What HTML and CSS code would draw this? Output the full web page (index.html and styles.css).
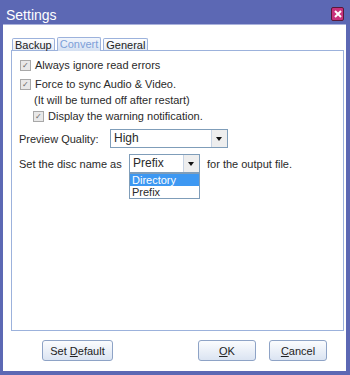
FILE: index.html
```html
<!DOCTYPE html>
<html lang="en">
  <head>
    <meta charset="UTF-8" />
    <title>Settings</title>
    <link rel="stylesheet" href="styles.css">
  </head>
  <body>
    <div class="window">
      <div class="titlebar">
        <span class="title">Settings</span>
        <span class="close">
          <svg width="8" height="8" viewBox="0 0 8 8">
            <path d="M1 1 L7 7 M7 1 L1 7" stroke="#fff" stroke-width="2" />
          </svg>
        </span>
      </div>
      <div class="client">
        <div class="tabs">
          <div class="tab">Backup</div>
          <div class="tab active">Convert</div>
          <div class="tab">General</div>
        </div>
        <div class="panel">
          <div class="check-row">
            <span class="checkbox">&#10003;</span>
            <span>Always ignore read errors</span>
          </div>
          <div class="check-row second">
            <span class="checkbox">&#10003;</span>
            <span>Force to sync Audio &amp; Video.</span>
          </div>
          <div class="note">(It will be turned off after restart)</div>
          <div class="check-row sub">
            <span class="checkbox">&#10003;</span>
            <span>Display the warning notification.</span>
          </div>
          <div class="field-row quality">
            <span class="label">Preview Quality:</span>
            <div class="combo wide">
              <span class="combo-value">High</span>
              <span class="combo-btn"></span>
            </div>
          </div>
          <div class="field-row disc">
            <span class="label label-disc">Set the disc name as</span>
            <div class="combo narrow">
              <span class="combo-value">Prefix</span>
              <span class="combo-btn"></span>
              <ul class="dropdown">
                <li class="selected">Directory</li>
                <li>Prefix</li>
              </ul>
            </div>
            <span class="suffix">for the output file.</span>
          </div>
        </div>
        <div class="footer">
          <button class="btn btn-default">Set <u>D</u>efault</button>
          <div class="spacer"></div>
          <button class="btn"><u>O</u>K</button>
          <button class="btn"><u>C</u>ancel</button>
        </div>
      </div>
    </div>
  </body>
</html>
```

FILE: styles.css
```css
body {
  margin: 0;
  font-family: "Liberation Sans", Arial, sans-serif;
  font-size: 11px;
  color: #2a2a2a;
}

.window {
  width: 350px;
  height: 375px;
  box-sizing: border-box;
  background-color: #5c68b4;
  border-left: 3px solid #5c68b4;
  border-right: 4px solid #5c68b4;
  border-bottom: 4px solid #5c68b4;
  display: flex;
  flex-direction: column;
}

.titlebar {
  height: 24px;
  display: flex;
  align-items: center;
  justify-content: space-between;
  padding-left: 3px;
  padding-right: 2px;
}

.title {
  color: #ffffff;
  font-size: 14px;
  margin-top: 6px;
}

.close {
  width: 11px;
  height: 12px;
  margin-top: 3px;
  background-color: #c8327c;
  border: 1px solid #5a1838;
  border-radius: 2px;
  display: flex;
  align-items: center;
  justify-content: center;
}

.client {
  flex: 1;
  background-color: #ffffff;
  padding: 12px 0 0 8px;
  border-top: 1px solid #aab2dc;
}

.tabs {
  display: flex;
  align-items: flex-end;
  height: 13px;
  padding-left: 1px;
}

.tab {
  height: 11px;
  line-height: 12px;
  padding: 0 2px;
  margin-right: 2px;
  border: 1px solid #9cb2dc;
  border-bottom: none;
  border-radius: 2px 2px 0 0;
  background: linear-gradient(#ffffff, #e6ecf6);
  font-size: 11px;
  color: #222222;
  position: relative;
}

.tab.active {
  height: 13px;
  color: #7d9fd8;
  background: linear-gradient(#f2f6fc, #d4e0f2);
  top: 1px;
}

.panel {
  border: 1px solid #9cb2dc;
  padding: 6px 0 0 7px;
  box-sizing: border-box;
  width: 333px;
  height: 281px;
}

.check-row {
  display: flex;
  align-items: center;
  height: 16px;
}

.check-row.second {
  margin-top: 3px;
}

.check-row.sub {
  padding-left: 13px;
}

.checkbox {
  width: 9px;
  height: 9px;
  margin: 0 4px 0 1px;
  border: 1px solid #a8a8a8;
  background-color: #e8e8e8;
  color: #666666;
  font-size: 8px;
  line-height: 9px;
  text-align: center;
}

.note {
  height: 16px;
  line-height: 16px;
  padding-left: 15px;
}

.field-row {
  display: flex;
  align-items: center;
}

.field-row.quality {
  margin-top: 5px;
}

.field-row.disc {
  margin-top: 6px;
}

.label {
  width: 91px;
}

.label-disc {
  width: 110px;
}

.combo {
  display: flex;
  height: 17px;
  border: 1px solid #7f9db9;
  background-color: #ffffff;
  position: relative;
}

.combo.wide {
  width: 116px;
}

.combo.narrow {
  width: 69px;
}

.combo-value {
  flex: 1;
  line-height: 17px;
  padding-left: 3px;
  font-size: 12px;
}

.combo-btn {
  width: 15px;
  border-left: 1px solid #c8d4e4;
  background-color: #eeeeee;
  position: relative;
}

.combo-btn::after {
  content: "";
  position: absolute;
  left: 4px;
  top: 7px;
  border-left: 3px solid transparent;
  border-right: 3px solid transparent;
  border-top: 4px solid #111111;
}

.dropdown {
  position: absolute;
  top: 18px;
  left: -1px;
  width: 69px;
  margin: 0;
  padding: 0;
  list-style: none;
  border: 1px solid #7f9db9;
  background-color: #ffffff;
}

.dropdown li {
  height: 12px;
  line-height: 12px;
  padding-left: 2px;
  font-size: 11px;
}

.dropdown li.selected {
  background-color: #3d98f2;
  color: #ffffff;
}

.suffix {
  margin-left: 7px;
}

.footer {
  display: flex;
  margin-top: 9px;
  padding-left: 31px;
  padding-right: 19px;
}

.spacer {
  flex: 1;
}

.btn {
  width: 58px;
  height: 21px;
  margin-left: 13px;
  border: 1px solid #8ea3c6;
  border-radius: 3px;
  background: linear-gradient(#fbfcfe, #dbe4f2);
  font-family: "Liberation Sans", Arial, sans-serif;
  font-size: 11px;
  color: #222222;
  padding: 0;
}

.btn-default {
  width: 71px;
  margin-left: 0;
}
```
